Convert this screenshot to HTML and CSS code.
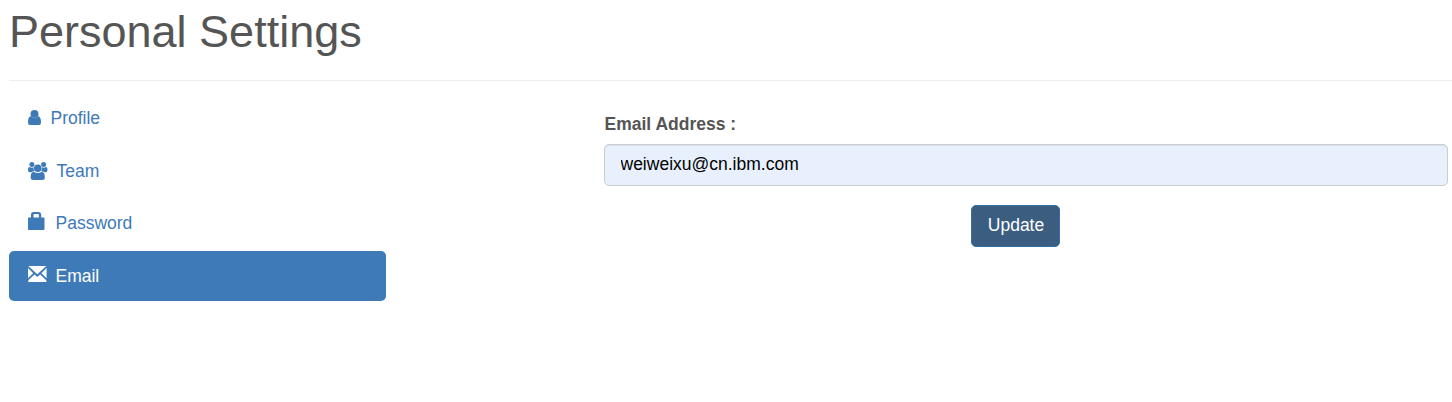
FILE: index.html
```html
<!DOCTYPE html>
<html lang="en">
<head>
<meta charset="utf-8">
<title>Personal Settings</title>
<link rel="stylesheet" href="styles.css">
</head>
<body>
<h1 class="page-title">Personal Settings</h1>
<main class="settings">
  <nav class="tabs">
    <a class="tab tab-profile"><svg class="icon" width="14" height="16" viewBox="0 0 14 16"><path d="M0 12.500C0 8.500 1 6.800 2.800 6.300C5 8.300 8 8.300 10.200 6.300C12 6.800 13 8.500 13 12.500Q13 15 11 15H2Q0 15 0 12.500Z"/><ellipse cx="6.500" cy="3.900" rx="4" ry="3.900"/></svg><span>Profile</span></a>
    <a class="tab tab-team"><svg class="icon" width="20" height="19" viewBox="0 0 20 19"><circle cx="3.900" cy="2.600" r="2.500"/><circle cx="15.600" cy="2.600" r="2.500"/><path d="M0 8.200Q0 5 1.500 5Q3.500 6.200 5.500 5.300Q5.200 7.800 6.400 9.200Q4.200 9.300 3.200 10.200H1.700Q0 10.200 0 8.200ZM19.500 8.200Q19.500 5 18 5Q16 6.200 14 5.300Q14.300 7.800 13.100 9.200Q15.300 9.300 16.300 10.200H17.800Q19.500 10.200 19.500 8.200Z"/><circle cx="9.750" cy="6.200" r="3.800"/><path d="M2.700 15.500C2.700 11.500 3.800 9.900 5.800 9.900C8.300 11.300 11.200 11.300 13.700 9.900C15.700 9.900 16.800 11.500 16.800 15.500Q16.800 18 14.300 18H5.200Q2.700 18 2.700 15.500Z"/></svg><span>Team</span></a>
    <a class="tab tab-password"><svg class="icon" width="17" height="18" viewBox="0 0 17 18"><path fill-rule="evenodd" d="M.8 5.500H3V2.500Q3 0 5.500 0H10.800Q13.200 0 13.200 2.500V5.500H15.700Q16.500 5.500 16.500 6.300V17.200Q16.500 18 15.700 18H.8Q0 18 0 17.200V6.300Q0 5.500 .8 5.500ZM5.500 5.500H10.900V3Q10.900 2 9.900 2H6.500Q5.500 2 5.500 3Z"/></svg><span>Password</span></a>
    <a class="tab tab-email active"><svg class="icon" width="19" height="16" viewBox="0 0 19 16"><path d="M.3 0H18.300L9.300 8.200ZM0 2L5.200 7.300L0 12.200ZM18.600 2L13.400 7.300L18.600 12.200ZM6.500 8.500L9.300 11L12.100 8.500L18.300 14.300V16H.3V14.300Z"/></svg><span>Email</span></a>
  </nav>
  <form class="email-form">
    <label class="field-label" for="email">Email Address :</label>
    <input class="field" id="email" type="text" value="weiweixu@cn.ibm.com">
    <button class="update" type="button">Update</button>
  </form>
</main>
</body>
</html>
```

FILE: styles.css
```css
* { box-sizing: border-box; }
body {
  margin: 0;
  font: 17.5px/25px "Liberation Sans", Arial, sans-serif;
  color: #555;
  background: #fff;
}
.page-title {
  height: 81px;
  margin: 0 0 0 9px;
  padding-top: 7px;
  border-bottom: 1px solid #eee;
  font-size: 45px;
  font-weight: 400;
  line-height: 50px;
}
.settings { display: flex; margin-left: 9px; }
.tabs {
  display: flex;
  flex-direction: column;
  gap: 2.5px;
  width: 377px;
  padding-top: 12.5px;
}
.tab {
  display: flex;
  align-items: flex-start;
  height: 50px;
  padding: 12px 19px;
  border-radius: 5px;
  color: #3e7ab8;
}
.icon { flex: none; fill: currentColor; margin-top: 4px; }
.tab-profile .icon { margin-right: 8.5px; }
.tab-team .icon { margin-top: 4px; margin-right: 8.5px; }
.tab-team span, .tab-email span { padding-top: 1px; }
.tab-password .icon { margin-top: 1px; margin-right: 10.5px; }
.tab-email .icon { margin-top: 3px; margin-right: 8.5px; }
.active { background: #3e7ab8; color: #fff; }
.email-form {
  display: flex;
  flex-direction: column;
  width: 844px;
  margin-left: 218px;
  padding-top: 31px;
}
.field-label { margin-bottom: 7px; padding-left: .5px; font-weight: 700; }
.field {
  height: 42px;
  padding: 0 15px 1px 15.5px;
  border: 1px solid #ccc;
  border-radius: 5px;
  background: #e8f0fe;
  box-shadow: inset 0 1px 1px rgba(0, 0, 0, .075);
  color: #000;
  font: inherit;
}
.update {
  width: 89px;
  height: 42px;
  margin: 19px 0 0 367px;
  padding: 0 0 2px 1px;
  border: 1px solid #336ea6;
  border-radius: 5px;
  background: #3b5d80;
  color: #fff;
  font: inherit;
}
```
